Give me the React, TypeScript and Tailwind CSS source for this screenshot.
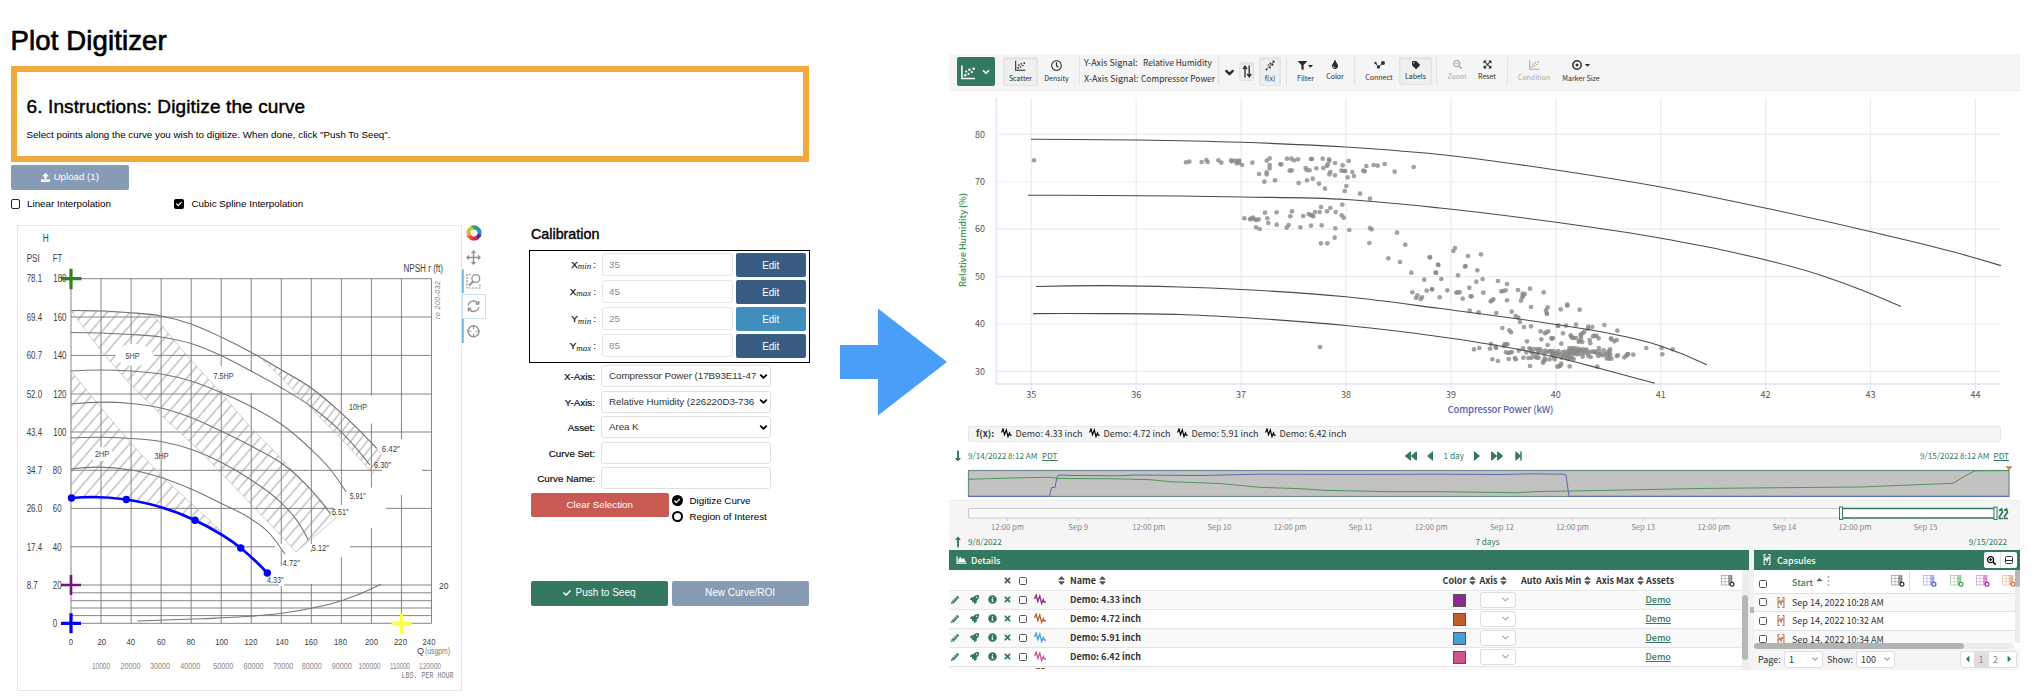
import React from "react";
import {
  FaBackward, FaCaretDown, FaCaretLeft, FaCaretRight, FaCaretUp, FaChartArea, FaCheck, FaExpandArrowsAlt,
  FaFilter, FaForward, FaInfoCircle, FaLongArrowAltDown, FaLongArrowAltUp, FaPencilAlt, FaRegClock,
  FaRocket, FaSearchMinus, FaSearchPlus, FaSort, FaStepForward, FaTag, FaTimes, FaTint, FaUpload,
} from "react-icons/fa";
import { ChevronDown } from "lucide-react";

type Pt = [number, number];

/* Smooth path through points with increasing x: cubic Hermite with parabolic slopes. */
function smooth(p: Pt[]): string {
  const n = p.length;
  const h = (i: number) => p[i + 1][0] - p[i][0];
  const s = (i: number) => (p[i + 1][1] - p[i][1]) / h(i);
  const m = p.map((_, i) => {
    if (i === 0) return s(0) - ((s(1) - s(0)) * h(0)) / (h(0) + h(1));
    if (i === n - 1) return s(n - 2) + ((s(n - 2) - s(n - 3)) * h(n - 2)) / (h(n - 2) + h(n - 3));
    return (s(i - 1) * h(i) + s(i) * h(i - 1)) / (h(i - 1) + h(i));
  });
  let d = `M${p[0][0]} ${p[0][1]}`;
  for (let i = 0; i < n - 1; i++) {
    const k = h(i) / 3;
    d += `C${p[i][0] + k} ${p[i][1] + m[i] * k} ${p[i + 1][0] - k} ${p[i + 1][1] - m[i + 1] * k} ${p[i + 1][0]} ${p[i + 1][1]}`;
  }
  return d;
}

function pairs(s: string, ox: number, oy: number): Pt[] {
  return s.trim().split(/\s+/).map((t) => {
    const [x, y] = t.split(",").map(Number);
    return [ox + x / 3, oy + y / 3] as Pt;
  });
}

/* ---------- Pump curve image ---------- */

const pumpCurves: Pt[][] = [
  [[71, 310.5], [131, 312.7], [161, 316], [191, 324], [221, 337], [250, 351.7], [281.7, 370], [311.3, 388], [341.7, 413.3], [376.7, 448.3]],
  [[71, 332.5], [131, 334.5], [161, 337], [191, 343.5], [221, 355.5], [250, 370.5], [281.7, 388], [311.3, 406.7], [341.7, 432.3], [370, 465]],
  [[71, 371], [131, 371], [161, 374], [191, 381], [221, 392.5], [250, 406], [281.7, 424.5], [310.7, 449], [330, 469], [346, 491.7]],
  [[71, 404], [131, 403.5], [161, 408], [191, 417.5], [221, 431], [256.7, 449], [281.7, 463.3], [311.7, 490.7], [330, 513.3]],
  [[71, 438], [131, 438.5], [161, 441.5], [193, 450], [221.7, 462.5], [250, 479.3], [281.7, 503.3], [300, 525], [308.3, 540]],
  [[71, 469], [131, 470], [161, 477.5], [191.7, 489.3], [221, 503.3], [250, 518.3], [270, 534], [285, 554.3]],
  [[137.3, 621], [200, 618.8], [250, 616.3], [281.7, 613.3], [311.3, 608.3], [341.7, 600.7], [381, 584.3]],
];
const digitized: Pt[] = [[71.5, 498], [126.3, 499.5], [195, 520.3], [240.7, 548], [267.3, 573]];
const psi: [string, string, number][] = [
  ["78.1", "180", 278.7], ["69.4", "160", 317], ["60.7", "140", 355.4], ["52.0", "120", 394], ["43.4", "100", 432],
  ["34.7", "80", 470.3], ["26.0", "60", 508.4], ["17.4", "40", 546.8], ["8.7", "20", 585], ["", "0", 623.3],
];
const pumpX: [string, number][] = [
  ["0", 71], ["20", 101.7], ["40", 130.7], ["60", 161.3], ["80", 190.7], ["100", 221.7], ["120", 251],
  ["140", 282], ["160", 311], ["180", 340.5], ["200", 371.5], ["220", 400.5], ["240", 429],
];
const pumpLbs: [string, number, number][] = [
  ["10000", 101, 19], ["20000", 130.5, 21], ["30000", 160, 21], ["40000", 190.3, 21], ["50000", 223.3, 21], ["60000", 253.5, 21],
  ["70000", 283.3, 21], ["80000", 311.7, 21], ["90000", 341.7, 21], ["100000", 369.5, 23], ["110000", 400, 21], ["120000", 430, 23],
];
const pumpTags: [string, number, number, number][] = [
  ["H", 42.7, 242.3, 6], ["PSI", 26.7, 262, 13], ["FT", 52.8, 262, 9.5], ["NPSH r (ft)", 403.5, 272.3, 39.5],
  ["5HP", 125.5, 358.7, 14], ["7.5HP", 213.5, 379.2, 20], ["10HP", 349, 409.5, 18], ["2HP", 95, 457, 14], ["3HP", 154.5, 459.3, 14],
  ['6.42"', 381.8, 451.5, 18], ['6.30"', 374, 467.6, 17], ['5.91"', 349.7, 498.6, 16], ['5.51"', 332, 514.8, 16.5],
  ['5.12"', 311.8, 550.6, 17], ['4.72"', 282.6, 566.3, 17.4], ['4.33"', 267, 583.2, 16.6], ["20", 439, 589.2, 9.5],
];

function PumpPlot() {
  const vs = Array.from({ length: 13 }, (_, i) => 71 + i * 30.04);
  const hs = [278.7, 317, 355.4, 394, 432, 470.3, 508.4, 546.8, 585, 592.8, 600.7, 608, 615.6, 623.3];
  const gaps: [number, number, number, number][] = [
    [218, 366, 6, 24], [249, 372, 5, 21], [369, 395.5, 5, 28], [399, 439, 5, 56], [369, 487.5, 5, 40.5], [382, 468, 40, 5],
    [334, 506, 52, 5], [275, 544, 75, 5.5], [339, 505, 5, 52], [309, 552, 5, 32], [279, 566, 5, 20], [117, 352, 37, 7],
  ];
  return (
    <svg className="block" width="445" height="466" viewBox="17 225 445 466" fontFamily='"Liberation Sans", sans-serif'>
      <defs>
        <pattern id="hatch" width="8.6" height="8.6" patternUnits="userSpaceOnUse" patternTransform="rotate(41)">
          <line x1="2" y1="0" x2="2" y2="9" stroke="#8c8c8c" strokeWidth="0.8" />
        </pattern>
        <pattern id="hatch2" width="6.5" height="6.5" patternUnits="userSpaceOnUse" patternTransform="rotate(38)">
          <line x1="2" y1="0" x2="2" y2="7" stroke="#8c8c8c" strokeWidth="0.8" />
        </pattern>
      </defs>
      <rect x="17.5" y="225.5" width="444" height="465" fill="#fff" stroke="#e6e6e6" />
      <g stroke="#777" strokeWidth="0.9">
        {vs.map((x) => <line key={x} x1={x} x2={x} y1="278.7" y2="623.3" />)}
        {hs.map((y) => <line key={y} x1="71" x2="431.5" y1={y} y2={y} />)}
      </g>
      {gaps.map(([x, y, w, h], i) => <rect key={i} x={x} y={y} width={w} height={h} fill="#fff" />)}
      <g stroke="#b0b0b0" strokeWidth="0.6">
        <path fill="url(#hatch)" d="M71 310.5L131 312.7L153 315L182 350L221 393L250 426.7L278 455L330 510L336 518L296 552L285 540L250 503L202 453L161 415L131 385L102 352Z" />
        <path fill="url(#hatch)" d="M71 371L103 410L137 450L167 481L221 531L195 520L160 507L126 499.5L71 498Z" />
        <path fill="url(#hatch2)" d="M263 360L281.7 370L311.3 388L341.7 413.3L376.7 448.3L381 455L373 474L350 448L311 408L281.7 378Z" />
      </g>
      <ellipse cx="134" cy="355" rx="19" ry="11" fill="#fff" />
      <rect x="93" y="447" width="19" height="14" fill="#fff" />
      <g fill="none" stroke="#7b736c" strokeWidth="1.1">
        {pumpCurves.map((c, i) => <path key={i} d={smooth(c)} />)}
      </g>
      <g fontSize="10" fill="#3c3c3c">
        {psi.map(([a, b, y]) => (
          <g key={y}>
            {a && <text x="26.7" y={y + 3.7} textLength={a.length === 4 ? 15.5 : 11} lengthAdjust="spacingAndGlyphs">{a}</text>}
            <text x={b.length === 3 ? 53.3 : 52.8} y={y + 3.7} textLength={b.length * 4.4} lengthAdjust="spacingAndGlyphs">{b}</text>
          </g>
        ))}
        {pumpX.map(([t, x]) => (
          <text key={t} x={x - t.length * 2.15} y="644.5" fontSize="9.5" textLength={t.length * 4.3} lengthAdjust="spacingAndGlyphs">{t}</text>
        ))}
        {pumpTags.map(([t, x, y, w]) => (
          <text key={t + x} x={x} y={y} fontSize={y < 275 ? 10 : 9.4} textLength={w} lengthAdjust="spacingAndGlyphs">{t}</text>
        ))}
      </g>
      <g fontSize="9" fill="#888">
        {pumpLbs.map(([t, x, w]) => (
          <text key={t} x={x - w / 2 + 0.5} y="668.8" textLength={w - 1} lengthAdjust="spacingAndGlyphs">{t}</text>
        ))}
        <text x="401.5" y="677.8" fontSize="9" fill="#777" fontFamily='"Liberation Mono", monospace' textLength="52" lengthAdjust="spacingAndGlyphs">LBS. PER HOUR</text>
        <text x="417" y="653.8" fill="#444">Q</text>
        <text x="425" y="653.8" fill="#777" textLength="25" lengthAdjust="spacingAndGlyphs">(usgpm)</text>
        <text transform="translate(439.5 319) rotate(-90)" fontSize="7" fontStyle="italic" fill="#777" textLength="38">ro 200-032</text>
      </g>
      <path d={smooth(digitized)} fill="none" stroke="#00f" strokeWidth="2.7" />
      {digitized.map(([x, y]) => <circle key={x} cx={x} cy={y} r="3.7" fill="#00f" />)}
      <g strokeWidth="3.2">
        <path stroke="#2f811d" d="M61 278.7h20.5M71 268.7v20.5" />
        <path stroke="#75157c" strokeWidth="2.6" d="M61 585h20M71 575v20" />
        <path stroke="#00f" d="M61 623.3h20M71 613.3v20" />
        <path stroke="#ffff4a" d="M391.5 623.3h20M401.5 613.3v20" />
      </g>
    </svg>
  );
}

function PlotTools() {
  const hues = ["#3d9b47", "#1f9e94", "#2f86c9", "#5b2d86", "#d9254b", "#ef4b2b", "#f5a623", "#b9cf3a"];
  return (
    <div className="flex w-6 flex-col items-center">
      <svg className="block" width="16" height="16" viewBox="-8 -8 16 16">
        {hues.map((h, i) => (
          <rect key={h} x="-3" y="-7.4" width="6" height="3.9" rx="0.8" fill={h} transform={`rotate(${i * 45})`} />
        ))}
      </svg>
      <svg className="mt-[5px] block" width="24" height="100" viewBox="462 246 24 100" fill="none" stroke="#939393" strokeWidth="1.4">
        <path d="M473.500 251.500v12M467.500 257.500h12M471.500 253l2-2 2 2M471.500 262l2 2 2-2M469 255.500l-2 2 2 2M478 255.500l2 2-2 2" />
        <path stroke="#5db3e6" strokeWidth="2" d="M462.700 269.500v23.500M462.700 319v24" />
        <path strokeDasharray="2 1.2" strokeWidth="1.2" d="M471 274.500h-4v13.500h13v-4" />
        <circle cx="475.800" cy="278.500" r="3.900" /><path d="M473 281.500l-4 4" strokeWidth="2" />
        <rect x="462.500" y="294.500" width="23" height="24" stroke="#c5e4f6" strokeWidth="1" />
        <path d="M468.300 305.500a5.200 5.200 0 0 1 9.500-2.200M478.700 307a5.200 5.200 0 0 1-9.500 2.200M478.700 301v3h-3M468.300 311.500v-3h3" />
        <circle cx="473.500" cy="331.300" r="5.500" /><path strokeWidth="1.100" d="M473.500 325v4M473.500 333.500v4M467.500 331.300h4M475.500 331.300h4" />
      </svg>
    </div>
  );
}

/* ---------- Left: digitizer ---------- */

function CalRow({ axis, sub, value, active }: { axis: string; sub: string; value: string; active?: boolean }) {
  return (
    <div className="flex h-[27.300px] items-start">
      <div className="flex h-6 w-[66px] items-center justify-end text-[9.800px] leading-none">
        <span className="[-webkit-text-stroke:0.25px_#222]">{axis}</span>
        <span className="relative top-[2px] font-['Liberation_Serif',serif] text-[9px] italic text-[#222]">{sub}</span>
        <span className="ml-[2px]">:</span>
      </div>
      <div className="ml-[6px] h-[23px] w-[130.500px] rounded-[3px] border border-[#e6e6e6] pl-[6px] text-[9.800px] leading-[21px] text-[#8a8a8a]">{value}</div>
      <div className={`ml-[3.500px] h-6 w-[69.500px] rounded-[2px] pt-px text-center text-[10px] leading-6 text-white ${active ? "bg-[#3f8ebd]" : "bg-[#385c82]"}`}>Edit</div>
    </div>
  );
}

function Field({ label, value, select }: { label: string; value?: string; select?: boolean }) {
  return (
    <div className="flex h-[25.500px] items-start">
      <div className="w-[66px] text-right text-[9.800px] leading-[23px] [-webkit-text-stroke:0.2px_#222]">{label}</div>
      <div className="ml-[6px] flex h-[22px] w-[170px] items-center rounded-[3px] border border-[#e0e0e0] pl-[7px] text-[9.800px] leading-none tracking-[-0.060px] text-[#333]">
        <span className="w-[147px] shrink-0 overflow-hidden whitespace-nowrap leading-4">{value}</span>
        {select && <ChevronDown className="ml-[2px] h-[11px] w-[11px] shrink-0 text-black" strokeWidth={4} />}
      </div>
    </div>
  );
}

function Digitizer() {
  return (
    <section className="h-[696px] w-[840px] shrink-0 pl-[10.500px] pt-[25px] font-['Liberation_Sans',sans-serif] text-black">
      <h1 className="h-[41px] text-[27.600px] leading-[32px] tracking-[0.100px] [-webkit-text-stroke:0.7px_#000]">Plot Digitizer</h1>
      <div className="h-24 w-[798px] border-[6px] border-[#f2a83a] pl-[10px] pt-[25px]">
        <h2 className="text-[19px] leading-[20px] tracking-[0.120px] [-webkit-text-stroke:0.45px_#000]">6. Instructions: Digitize the curve</h2>
        <p className="mt-[12px] text-[9.800px] leading-3">Select points along the curve you wish to digitize. When done, click "Push To Seeq".</p>
      </div>
      <div className="mt-[3px] flex h-[24.500px] w-[118.500px] items-center justify-center gap-1 rounded-[2px] bg-[#879cb4] text-[9.700px] leading-none text-white">
        <FaUpload className="h-[9px] w-[9px]" />Upload (1)
      </div>
      <div className="mt-[8.500px] flex h-[12px] items-center text-[9.800px] leading-none">
        <span className="h-[9.500px] w-[9.500px] rounded-[2px] border border-[#222]" />
        <span className="ml-[7px] w-[146.500px]">Linear Interpolation</span>
        <span className="flex h-[10px] w-[10px] items-center justify-center rounded-[2px] bg-black"><FaCheck className="h-[6px] w-[6px] text-white" /></span>
        <span className="ml-[8px]">Cubic Spline Interpolation</span>
      </div>
      <div className="mt-[15px] flex">
        <div className="ml-[6.500px] flex items-start"><PumpPlot /><PlotTools /></div>
        <div className="ml-[43px] w-[281px]">
          <h3 className="mt-px pl-[2px] text-[14.300px] leading-[16px] [-webkit-text-stroke:0.4px_#000]">Calibration</h3>
          <div className="mt-[8px] h-[112.500px] w-[280.500px] border-[1.5px] border-black pt-[1.500px]">
            <CalRow axis="X" sub="min" value="35" />
            <CalRow axis="X" sub="max" value="45" />
            <CalRow axis="Y" sub="min" value="25" active />
            <CalRow axis="Y" sub="max" value="85" />
          </div>
          <div className="mt-[2.500px]">
            <Field label="X-Axis:" value="Compressor Power (17B93E11-47" select />
            <Field label="Y-Axis:" value="Relative Humidity (226220D3-736" select />
            <Field label="Asset:" value="Area K" select />
            <Field label="Curve Set:" />
            <Field label="Curve Name:" />
          </div>
          <div className="ml-[2px] flex h-[88.500px]">
            <div className="h-6 w-[137.500px] rounded-[2px] bg-[#c85a53] text-center text-[9.800px] leading-6 text-white">Clear Selection</div>
            <div className="ml-[3px] text-[9.800px] leading-none">
              <div className="flex h-4 items-center"><span className="flex h-[11px] w-[11px] items-center justify-center rounded-full bg-black"><FaCheck className="h-[6px] w-[6px] text-white" /></span><span className="ml-[7px]">Digitize Curve</span></div>
              <div className="flex h-4 items-center"><span className="h-[11px] w-[11px] rounded-full border-2 border-black" /><span className="ml-[7px]">Region of Interest</span></div>
            </div>
          </div>
          <div className="ml-[2px] flex gap-[3.500px] text-[10px] leading-none text-white">
            <div className="flex h-[24.500px] w-[137px] items-center justify-center gap-1 rounded-[2px] bg-[#33785f]"><FaCheck className="h-2 w-2" />Push to Seeq</div>
            <div className="flex h-[24.500px] w-[137px] items-center justify-center rounded-[2px] bg-[#879cb4]">New Curve/ROI</div>
          </div>
        </div>
      </div>
    </section>
  );
}

/* ---------- Right: workbench ---------- */

function ScatterIcon({ className }: { className?: string }) {
  return (
    <svg className={className} viewBox="0 0 16 16" fill="currentColor">
      <path d="M1 1v14h14" fill="none" stroke="currentColor" strokeWidth="1.600" />
      <circle cx="4.500" cy="11.500" r="1.300" /><circle cx="5.500" cy="7.500" r="1.200" /><circle cx="8" cy="10" r="1.200" />
      <circle cx="9" cy="5.500" r="1.300" /><circle cx="11.500" cy="8" r="1.200" /><circle cx="13.500" cy="4.500" r="1.400" />
    </svg>
  );
}
function Wave({ className }: { className?: string }) {
  return (
    <svg className={className} viewBox="0 0 12 11" fill="none" stroke="currentColor" strokeWidth="1.300">
      <path d="M0.500 5l1.700-4 1.600 6.500 2-5.500 1.800 7.500 1.700-4 .8 2.500h1.900" />
    </svg>
  );
}
function CapsuleIcon({ className }: { className?: string }) {
  return (
    <svg className={className} viewBox="0 0 8 12" fill="none" stroke="currentColor" strokeWidth="1.100">
      <path d="M2.500 .6H.8v10.800h1.700M5.500 .6h1.700v10.800H5.500M1.500 7l1.300-3 1.200 4 1.200-4.500 1 2" />
    </svg>
  );
}
function ColumnsIcon({ className }: { className?: string }) {
  return (
    <svg className={className} viewBox="0 0 14 12" fill="none" stroke="currentColor">
      <rect x=".5" y=".5" width="10.500" height="9.500" strokeWidth=".7" opacity=".5" />
      <rect x="7.500" y=".5" width="3.500" height="9.500" fill="currentColor" opacity=".45" stroke="none" />
      <path d="M.5 3.500h10.500M.5 6.700h10.500M4 .5v9.500M7.500 .5v9.500" strokeWidth=".5" opacity=".5" />
      <circle cx="11" cy="9.300" r="1.900" fill="#fff" strokeWidth="1.200" />
    </svg>
  );
}

const Rule = ({ className }: { className: string }) => <span className={`h-[28px] w-px shrink-0 bg-[#e3e3e3] ${className}`} />;

function Toolbar() {
  const item = "flex shrink-0 flex-col items-center justify-start text-[7px] leading-[9px]";
  const pressed = "rounded-[2px] border border-[#e4e4e4] bg-[#f0f0f0] shadow-[inset_0_1px_3px_rgba(0,0,0,0.08)]";
  return (
    <div className="flex h-[37px] w-full items-start whitespace-nowrap border-b border-[#ececec] bg-[#f5f5f5] pl-2 pt-[3px] text-[#2b2b2b]">
      <div className="flex h-[29px] w-[38px] shrink-0 items-center justify-center gap-[5px] rounded-[2px] bg-[#33785f] text-white">
        <ScatterIcon className="h-[16px] w-[15px]" /><ChevronDown className="h-[10px] w-[10px]" strokeWidth={4} />
      </div>
      <div className={`${item} ${pressed} ml-2 h-[29px] w-[35px] pt-[2px]`}><ScatterIcon className="mb-[3px] h-[11px] w-[11px]" />Scatter</div>
      <div className={`${item} ml-[4px] w-[29px] pt-[3px]`}><FaRegClock className="mb-[3px] h-[11px] w-[11px]" />Density</div>
      <Rule className="ml-[8px]" />
      <div className="ml-[4px] flex w-[134px] shrink-0 flex-col text-[8.300px]">
        <div className="-mt-[2px] flex h-[15.500px] leading-[15px]"><span className="w-[59px] text-[8.900px]">Y-Axis Signal:</span><span>Relative Humidity</span></div>
        <div className="flex h-[15.500px] leading-[15px]"><span className="w-[57px] text-[8.900px]">X-Axis Signal:</span><span className="tracking-[0.050px]">Compressor Power</span></div>
      </div>
      <Rule className="" />
      <ChevronDown className="ml-[4px] mt-[9px] h-[13px] w-[13px] shrink-0" strokeWidth={4.2} />
      <div className={`${pressed} ml-[3px] mt-[5px] flex h-[19px] w-[15px] shrink-0 items-center justify-center`}>
        <svg width="10" height="13" viewBox="0 0 10 13" fill="none" stroke="#333" strokeWidth="1.400"><path d="M3 12.500V1.500M1 4l2-2.700L5 4M7.200 .5v11M5.200 9l2 2.700 2-2.700" /></svg>
      </div>
      <div className={`${item} ${pressed} ml-[5px] h-[29px] w-[22px] pt-[2px]`}>
        <svg className="mb-[3px]" width="11" height="11" viewBox="0 0 11 11" fill="#333"><path d="M1 9.500L9.500 1.500" stroke="#333" strokeWidth=".7" /><circle cx="3.500" cy="5" r=".8" /><circle cx="5.500" cy="3.500" r="1" /><circle cx="8.500" cy="1.700" r="1.100" /><circle cx="5" cy="7.500" r=".9" /><circle cx="7.500" cy="4.800" r="1" /><circle cx="1.500" cy="9.500" r="1" /></svg>
        f(x)
      </div>
      <Rule className="ml-[5px]" />
      <div className={`${item} ml-[8px] w-[21px] pt-[4px]`}><span className="mb-[4px] flex items-center"><FaFilter className="h-[9px] w-[9px]" /><FaCaretDown className="h-[8px] w-[7px]" /></span>Filter</div>
      <div className={`${item} ml-[8px] w-[22px] pt-[3px]`}><FaTint className="mb-[3px] h-[9px] w-[8px]" />Color</div>
      <Rule className="ml-[8px]" />
      <div className={`${item} ml-[9px] w-[30px] pt-[4px]`}>
        <svg className="mb-[4px]" width="11" height="8" viewBox="0 0 11 8"><path d="M1.500 2l3 4 4.500-4" fill="none" stroke="#333" /><circle cx="1.500" cy="2" r="1.200" fill="#333" /><circle cx="4.500" cy="6" r="1.700" fill="#333" /><circle cx="9" cy="2" r="2" fill="#333" /></svg>
        Connect
      </div>
      <div className={`${item} ${pressed} ml-[5px] h-[28px] w-[33px] pt-[3px]`}><FaTag className="mb-[3px] h-[8px] w-[8px]" />Labels</div>
      <Rule className="ml-[4px]" />
      <div className={`${item} ml-[9px] w-[22px] pt-[3px] text-[#aaa]`}><FaSearchMinus className="mb-[3px] h-[9px] w-[9px]" />Zoom</div>
      <div className={`${item} ml-[8px] w-[22px] pt-[3px]`}><FaExpandArrowsAlt className="mb-[3px] h-[9px] w-[9px]" />Reset</div>
      <Rule className="ml-[9px]" />
      <div className={`${item} ml-[9px] w-[34px] pt-[2px] text-[#aaa]`}><ScatterIcon className="mb-[3px] h-[11px] w-[11px]" />Condition</div>
      <div className={`${item} ml-[10px] w-[40px] pt-[3px]`}>
        <span className="mb-[4px] flex items-center gap-[2px]"><svg width="10" height="10" viewBox="0 0 10 10"><circle cx="5" cy="5" r="4.200" fill="none" stroke="#333" strokeWidth="1.500" /><circle cx="5" cy="5" r="1.500" fill="#333" /></svg><FaCaretDown className="h-[8px] w-[7px]" /></span>Marker Size
      </div>
    </div>
  );
}

const scatter: Pt[] = [
  [1034, 160.3],
  ...pairs(
    `18,67 28,65 65,66 79,60 83,66 115,61 124,68 154,61 155,64 165,62 170,70 173,64 178,62 177,69 186,75 217,68 237,102 253,125 260,62 260,97 260,103 269,55 269,75 269,85 285,121 301,73 304,73 321,56 329,92 335,91 334,56 342,61 354,58 356,129 377,84 380,90 381,121 389,91 393,57 396,57 398,116 409,85 417,131 428,56 430,84 435,146 441,78 447,58 448,62 443,73 451,96 448,103 465,69 465,106 484,92 488,76 492,93 496,93 503,112 506,63 517,96 522,108 499,138 494,153 540,161 570,176 550,92 554,94 559,78 581,75 593,77 614,72 644,95 701,81
    193,235 210,238 213,236 219,233 224,238 230,240 236,238 228,262 239,267 255,218 262,235 265,249 290,217 290,254 320,263 326,255 331,229 336,214 361,262 370,228 386,222 392,225 396,226 400,229 405,216 419,216 423,201 393,257 425,256 423,310 442,310 464,293 466,265 441,214 451,204 467,216 487,194 485,226 491,233 508,270 570,264 575,268 568,309 651,278 676,314 625,355 660,366 749,352 774,374 694,398 768,398 733,419 740,452 756,448 697,457 712,466 708,474 726,472 722,477 420,621`,
    1180, 140),
  ...pairs(
    `0,232 25,255 17,278 34,297 6,328 29,352 52,331 75,204 70,213 114,228 153,223 105,260 107,258 142,271 84,286 158,297 139,305 118,323 79,338 84,337 89,337 98,356 122,349 125,349 160,338 204,303 231,312 214,334 219,333 227,331 231,361 190,358 186,361 182,364 264,330 300,326 341,337 278,341 284,342 279,347 277,352 273,362 303,381 353,382 348,391 350,399 351,402 392,388 412,374 412,377 449,389 119,392 146,397 199,399 245,395 257,408 265,413 270,426 217,444 238,451 243,457 282,441 303,439 332,454 345,460 349,457 355,454 383,438 385,437 408,437 438,434 399,460 475,440 487,441 474,446 523,435 562,452 463,455 458,460 453,463 291,484 334,478 364,475 366,475 369,475 353,495 394,491 422,466 424,470 426,473 432,474 438,474 452,467 453,475 446,485 450,483 457,486 479,480 481,490 489,469 494,467 500,468 506,475 543,475 544,478 553,484 560,480 649,504 695,504 697,523 728,508 183,492 180,506 197,500 198,504 148,504 132,508 224,493 229,493 232,493 222,498 187,538 204,543
    228,517 235,519 240,518 246,516 236,537 255,534 257,538 266,512 279,505 280,533 289,517 298,505 302,507 303,515 295,534 304,533 309,520 312,507 315,530 320,533 322,507 323,520 326,533 325,512 330,507 333,513 339,548 341,543 344,535 342,521 346,540 349,516 345,512 357,514 359,538 362,513 365,518 366,525 370,520 371,513 374,538 372,530 378,519 380,527 383,521 385,513 390,524 394,551 391,557 387,559 382,560 419,559 300,558 502,560 395,533 397,517 400,530 402,525 405,515 408,529 411,520 413,525 416,513 418,504 419,518 420,530 422,509 425,517 427,505 430,522 431,537 432,512 434,504 437,518 440,523 442,514 444,506 447,512 448,522 452,509 455,517 458,530 460,508 462,519 466,512 470,509 472,519 475,527 479,516 482,531 487,515 492,516 497,514 500,520 505,528 507,504 508,515 512,522 517,526 521,511 524,522 529,524 533,516 536,527 540,508 539,515 541,524 537,536 544,536 530,535 560,528 564,526 583,532 589,527 593,522 594,523 610,524 412,536 425,534 418,535`,
    1430, 180),
];
const fits: Pt[][] = [
  [[1031, 139.3], [1136, 140], [1241, 142.3], [1346, 147], [1451, 155.7], [1556, 170], [1670, 188.7], [1765, 208], [1870, 231.5], [1953, 251.8], [2001, 265.6]],
  [[1028, 195.3], [1180, 196], [1241, 197], [1346, 199.5], [1440, 208], [1556, 222.3], [1660.8, 238.2], [1720, 249.5], [1823, 276], [1901, 306.6]],
  [[1036, 286.5], [1107, 285.6], [1180, 287], [1241, 289.5], [1346, 296.8], [1440, 308.5], [1556, 324.5], [1610, 333.5], [1660, 345.7], [1706.7, 364.7]],
  [[1033, 313.6], [1100, 313.6], [1180, 314.5], [1241, 317.5], [1346, 325.5], [1440, 336.7], [1500, 346], [1556, 357.3], [1600, 368.5], [1654.7, 383.3]],
];

function ScatterChart() {
  return (
    <svg className="block" width="1071" height="333" viewBox="949 91 1071 333" fontSize="9" fill="#555">
      <g stroke="#ececec" strokeWidth="1.200">
        {Array.from({ length: 10 }, (_, i) => <line key={i} x1={1031.300 + i * 104.9} x2={1031.300 + i * 104.9} y1="98" y2="384" />)}
        {Array.from({ length: 6 }, (_, i) => <line key={i} x1="996" x2="2001" y1={134.3 + i * 47.43} y2={134.3 + i * 47.43} />)}
      </g>
      <path d="M996.300 98v286M996 384h1005" fill="none" stroke="#e0e4f6" strokeWidth="1.400" />
      {Array.from({ length: 10 }, (_, i) => (
        <g key={i}>
          <path d={`M${1031.3 + i * 104.9} 384v6`} stroke="#dfe3f5" />
          <text x={1031.3 + i * 104.9} y="398" textAnchor="middle">{35 + i}</text>
        </g>
      ))}
      {Array.from({ length: 6 }, (_, i) => <text key={i} x="985" y={137.600 + i * 47.43} textAnchor="end">{80 - i * 10}</text>)}
      <g fill="#888884" fillOpacity="0.78">{scatter.map(([x, y], i) => <circle key={i} cx={x} cy={y} r="2.350" />)}</g>
      <g fill="none" stroke="#4a4a4a" strokeWidth="1.100">{fits.map((c, i) => <path key={i} d={smooth(c)} />)}</g>
      <text transform="translate(965.500 240) rotate(-90)" textAnchor="middle" fontWeight="500" fill="#3d9150" textLength="94">Relative Humidity (%)</text>
      <text x="1500.500" y="412.500" textAnchor="middle" fontSize="9.500" fontWeight="500" fill="#5963ab" textLength="106">Compressor Power (kW)</text>
    </svg>
  );
}

const inches = ["4.33", "4.72", "5.91", "6.42"];

function Trend() {
  const green: Pt[] = [[968, 479.300], [1010, 478], [1050, 477.300], [1060, 478.500], [1110, 478.700], [1150, 479.700], [1170, 481.700], [1220, 483.500], [1260, 487.300], [1300, 488.700], [1325, 490.300], [1390, 491.700], [1440, 491.700], [1515, 492.700], [1540, 491.500], [1600, 490.500], [1700, 488.500], [1780, 487.700], [1860, 487], [1910, 485], [1953, 483.300], [1965, 476], [1975, 470.800], [2009, 470.500]];
  return (
    <svg className="block" width="1071" height="36" viewBox="949 464 1071 36">
      <rect x="968.500" y="470.500" width="1040.500" height="26" fill="#c2c2c1" stroke="#6d8b90" strokeWidth="1.200" />
      <path d="M968 496.300H1049.500L1051.500 487.500H1055L1057 477L1058.500 475L1075 475.500L1120 475.800L1135 475L1200 475.500L1260 474.200L1350 474.400L1440 474.200L1500 474.500L1530 473.800L1564 474.200L1566 475L1569 496.300H2009" fill="none" stroke="#5c69b8" />
      <path d={"M" + green.map((p) => p.join(" ")).join("L")} fill="none" stroke="#4e9657" />
      <path d="M2005.500 466.200h7l-3.500 4.300z" fill="#c8775c" />
    </svg>
  );
}

function RangeSlider() {
  const names = ["12:00 pm", "Sep 9", "12:00 pm", "Sep 10", "12:00 pm", "Sep 11", "12:00 pm", "Sep 12", "12:00 pm", "Sep 13", "12:00 pm", "Sep 14", "12:00 pm", "Sep 15"];
  return (
    <svg className="block" width="1071" height="34" viewBox="949 500 1071 34" fontSize="7.700" fill="#858585">
      <path d="M949 500.500h1071" stroke="#ebebeb" />
      <rect x="968.500" y="508.500" width="1040" height="9.500" rx="1" fill="#fafafa" stroke="#c9c9c9" strokeWidth="1.200" />
      <rect x="1841" y="508.500" width="154" height="9.500" fill="#fff" stroke="#33785f" strokeWidth="1.500" />
      <rect x="1997" y="507" width="13" height="13" fill="#f5f5f5" />
      <rect x="1839.500" y="507" width="3" height="12.500" fill="#fff" stroke="#33785f" />
      <rect x="1994" y="507" width="3" height="12.500" fill="#fff" stroke="#33785f" />
      <path d="M1999 510.500l2.500-1.500 1 3-3 4.500v2h3.500M2004 510.500l2.500-1.500 1 3-3 4.500v2h3.500" fill="none" stroke="#33785f" strokeWidth="1.700" />
      {names.map((n, i) => (
        <g key={i}>
          <path d={`M${1007.5 + i * 70.62} 518.500v2.500`} stroke="#ccc" />
          <text x={1007.5 + i * 70.62} y="530" textAnchor="middle">{n}</text>
        </g>
      ))}
    </svg>
  );
}

const box = "inline-block h-[8px] w-[8px] shrink-0 rounded-[1.500px] border border-[#555] bg-white";

function Sort() {
  return <FaSort className="ml-[3px] h-[11px] w-[7px] shrink-0 text-[#555]" />;
}

function DetailsPanel() {
  const rows: [string, string, string][] = [
    ["4.33", "text-[#8e2a8b]", "bg-[#8e2a8b]"], ["4.72", "text-[#c15c2c]", "bg-[#c15c2c]"],
    ["5.91", "text-[#469fdb]", "bg-[#469fdb]"], ["6.42", "text-[#d2528a]", "bg-[#d2528a]"],
  ];
  return (
    <div className="w-[799.500px] shrink-0">
      <div className="flex h-5 items-center gap-[4px] bg-[#33785f] pl-[7px] text-[9px] font-medium leading-none text-white"><FaChartArea className="h-[10px] w-[11px]" />Details</div>
      <div className="flex h-[99.500px]">
        <div className="w-[793px] overflow-hidden">
          <div className="flex h-[20.500px] items-center border-b border-[#e3e5e9] pt-[2px] text-[9px] font-bold leading-none text-[#333]">
            <div className="ml-[54px] flex w-[16px] items-center"><FaTimes className="h-[9px] w-[9px] text-[#555]" /></div>
            <div className="flex w-[36px] items-center"><span className={box} /></div>
            <div className="flex w-[15px] items-center"><Sort /></div>
            <div className="flex w-[372.500px] items-center">Name<Sort /></div>
            <div className="flex w-[37px] items-center">Color<Sort /></div>
            <div className="flex w-[41.500px] items-center">Axis<Sort /></div>
            <div className="w-[24px]">Auto</div>
            <div className="flex w-[51px] items-center whitespace-nowrap">Axis Min<Sort /></div>
            <div className="flex w-[50px] items-center whitespace-nowrap">Axis Max<Sort /></div>
            <div className="w-[75px]">Assets</div>
            <ColumnsIcon className="h-3 w-[14px] text-[#333]" />
          </div>
          {rows.map(([n, tc, bc], i) => (
            <div key={n} className={`flex h-[19.100px] items-center border-b border-[#e3e5e9] text-[9px] font-bold leading-none text-[#333] ${i % 2 ? "bg-white" : "bg-[#f9f9f9]"}`}>
              <FaPencilAlt className="ml-[2px] h-[8px] w-[8px] text-[#33785f]" />
              <FaRocket className="ml-[11px] h-[9px] w-[9px] text-[#33785f]" />
              <FaInfoCircle className="ml-[9px] h-[9px] w-[9px] text-[#33785f]" />
              <FaTimes className="ml-[6px] h-[9px] w-[9px] text-[#33785f]" />
              <span className={`ml-[7px] ${box}`} />
              <Wave className={`ml-[7px] h-[11px] w-[12px] ${tc}`} />
              <span className="ml-[24px] w-[383px] tracking-[0.020px]">Demo: {n} inch</span>
              <span className={`mt-[2px] h-[13px] w-[12.500px] border border-[#555] ${bc}`} />
              <span className="ml-[14.500px] flex h-[16px] w-[36px] items-center justify-end rounded-[3px] border border-[#dcdcdc] bg-white pr-[4px]"><ChevronDown className="h-[11px] w-[11px] text-[#aaa]" strokeWidth={2.6} /></span>
              <span className="ml-[129.500px] font-medium text-[#33785f] underline">Demo</span>
            </div>
          ))}
          <div className="flex h-[3px] gap-[1px] bg-[#f9f9f9] pl-[87px] pt-[1.500px]"><span className="h-px w-[4px] bg-[#9a5a3a]" /><span className="h-px w-[4px] bg-[#9a5a3a]" /></div>
        </div>
        <div className="w-[6.500px] bg-[#ededed] pt-[25px]"><div className="h-[65px] w-[6px] rounded-full bg-[#b7b7b7]" /></div>
      </div>
    </div>
  );
}

function MiniSelect({ value }: { value: string }) {
  return (
    <span className="flex h-[17px] w-[38.500px] items-center justify-between rounded-[3px] border border-[#ddd] bg-white pl-[4px] pr-[2px]">{value}<ChevronDown className="h-[10px] w-[10px] text-[#aaa]" strokeWidth={2.6} /></span>
  );
}

function CapsulesPanel() {
  return (
    <div className="w-[266px] shrink-0">
      <div className="flex h-5 items-center bg-[#33785f] pl-[9px] text-[9px] font-medium leading-none text-white">
        <CapsuleIcon className="mb-[2px] h-[11px] w-[8px]" /><span className="ml-[6px]">Capsules</span>
        <div className="ml-auto mr-[3px] flex h-[16.500px] w-[33.500px] items-center rounded-[2px] bg-white text-black">
          <span className="flex h-full w-[17px] items-center justify-center border-r border-[#ddd]"><FaSearchPlus className="h-[9px] w-[9px]" /></span>
          <span className="flex w-4 items-center justify-center"><span className="flex h-[8px] w-[8px] items-center rounded-[1.500px] border border-[#333]"><span className="h-px w-full bg-[#333]" /></span></span>
        </div>
      </div>
      <div className="flex h-[72.500px] bg-white">
        <div className="h-[72.500px] w-[260.500px] overflow-hidden text-[9px] leading-none">
          <div className="flex h-[23.500px] items-center border-b-[1.5px] border-[#dce1ea] pl-[5px]">
            <span className={`${box} mt-[5px]`} />
            <span className="ml-[25px] mt-[2px] w-[22px] font-medium text-[#33785f]">Start</span><FaCaretUp className="mb-1 ml-[3px] h-[9px] w-[7px] shrink-0 text-[#33785f]" />
            <svg className="ml-[4px] shrink-0" width="3" height="12" viewBox="0 0 3 12" fill="#aaa"><circle cx="1.500" cy="2" r="1" /><circle cx="1.500" cy="6" r="1" /><circle cx="1.500" cy="10" r="1" /></svg>
            <ColumnsIcon className="ml-[61px] h-3 w-[14px] shrink-0 text-[#333]" />
            <span className="ml-[4px] h-5 w-px shrink-0 bg-[#ddd]" />
            <ColumnsIcon className="ml-[13px] h-3 w-[14px] shrink-0 text-[#4f5fc0]" />
            <ColumnsIcon className="ml-[12.500px] h-3 w-[14px] shrink-0 text-[#3f9b50]" />
            <ColumnsIcon className="ml-[12.500px] h-3 w-[14px] shrink-0 text-[#a0309a]" />
            <ColumnsIcon className="ml-[12px] h-3 w-[14px] shrink-0 text-[#e0703c]" />
          </div>
          {["10:28", "10:32", "10:34"].map((t, i) => (
            <div key={t} className={`flex h-[18.500px] items-center border-b border-[#dce1ea] pl-[5px] text-[#333] ${i % 2 ? "bg-white" : "bg-[#f9f9f9]"}`}>
              <span className={box} /><CapsuleIcon className="ml-[10px] h-[11px] w-[8px] text-[#b0714a]" /><span className="ml-[7px]">Sep 14, 2022 {t} AM</span>
            </div>
          ))}
        </div>
        <div className="w-[5.500px] bg-[#ececec]"><div className="h-[17px] rounded-b-full bg-[#b7b7b7]" /></div>
      </div>
      <div className="flex h-[6.500px] w-[260px] rounded-full bg-[#ececec]"><div className="h-[6px] w-[210px] rounded-full bg-[#b3b3b3]" /></div>
      <div className="flex h-[20.500px] items-center bg-[#f5f5f5] pl-[4px] text-[9px] leading-none text-[#333]">
        <span className="w-[26px]">Page:</span><MiniSelect value="1" />
        <span className="ml-[4.500px] w-[29px]">Show:</span><MiniSelect value="100" />
        <span className="ml-auto mr-[3px] flex h-[17px] w-[57.500px] items-center rounded-[3px] border border-[#ddd] bg-white text-[#888]">
          <span className="flex w-[13px] justify-center"><FaCaretLeft className="h-[10px] text-[#33785f]" /></span>
          <span className="flex h-full w-[15px] items-center justify-center bg-[#dedede]">1</span>
          <span className="flex w-[14px] items-center justify-center">2</span>
          <span className="flex w-[13px] justify-center"><FaCaretRight className="h-[10px] text-[#33785f]" /></span>
        </span>
      </div>
    </div>
  );
}

function Workbench() {
  return (
    <section className="h-[696px] w-[1071px] shrink-0 pt-[54px] font-['Noto_Sans_CJK_SC',sans-serif]">
      <Toolbar />
      <ScatterChart />
      <div className="ml-[19px] mt-[2px] flex h-[15.500px] w-[1033px] items-center rounded-[2px] border border-[#e8e8e8] bg-[#f5f5f5] pl-[7px] text-[9px] leading-none text-[#333]">
        <span className="w-[25px] font-bold">f(x):</span>
        {inches.map((n) => (
          <span key={n} className="flex w-[88px] items-center whitespace-nowrap"><Wave className="mb-[2px] mr-[3.500px] h-[10px] w-[11px] text-black" />Demo: {n} inch</span>
        ))}
      </div>
      <div className="flex h-[22.500px] items-center pl-[5px] pt-[6px] text-[8.200px] leading-none text-[#33785f]">
        <FaLongArrowAltDown className="h-[12px] w-[8px]" />
        <span className="mb-[2px] ml-[6px] w-[74px] whitespace-nowrap">9/14/2022 8:12 AM</span><span className="mb-[2px] underline">PDT</span>
        <div className="ml-[347px] flex w-[118px] items-center justify-between">
          <FaBackward className="h-[12px] w-[12px]" />
          <svg className="h-[10px] w-[6px]" viewBox="0 0 6 10" fill="currentColor"><path d="M6 0v10L0 5z" /></svg>
          <span className="mb-[2px]">1 day</span>
          <svg className="h-[10px] w-[6px]" viewBox="0 0 6 10" fill="currentColor"><path d="M0 0v10l6-5z" /></svg>
          <FaForward className="h-[12px] w-[12px]" />
          <FaStepForward className="h-[12px] w-[9px]" />
        </div>
        <span className="mb-[2px] ml-auto whitespace-nowrap">9/15/2022 8:12 AM</span><span className="mb-[2px] ml-[4px] mr-[11px] underline">PDT</span>
      </div>
      <Trend />
      <div className="h-[50px] bg-[#f5f5f5]">
        <RangeSlider />
        <div className="flex h-[15px] items-center justify-between pl-[5px] pr-[13px] text-[8.200px] leading-none text-[#33785f]">
          <span className="flex w-[60px] items-center"><FaLongArrowAltUp className="mr-[6px] h-[12px] w-[8px]" />9/8/2022</span>
          <span className="ml-[14px]">7 days</span>
          <span className="w-[60px] text-right">9/15/2022</span>
        </div>
      </div>
      <div className="flex">
        <DetailsPanel />
        <div className="flex w-[5.500px] items-center bg-[#f3f3f3]"><span className="ml-[1px] h-[6px] w-[4px] bg-[#b5b5b5]" /></div>
        <CapsulesPanel />
      </div>
    </section>
  );
}

export default function App() {
  return (
    <main className="flex h-[696px] w-[2042px] overflow-hidden bg-white">
      <Digitizer />
      <div className="w-[109px] shrink-0 pt-[308px]">
        <svg className="block" width="107" height="108" viewBox="0 0 107 108"><path d="M0 37h38V.5L107 54 38 107.500V71H0z" fill="#499ef8" /></svg>
      </div>
      <Workbench />
    </main>
  );
}
